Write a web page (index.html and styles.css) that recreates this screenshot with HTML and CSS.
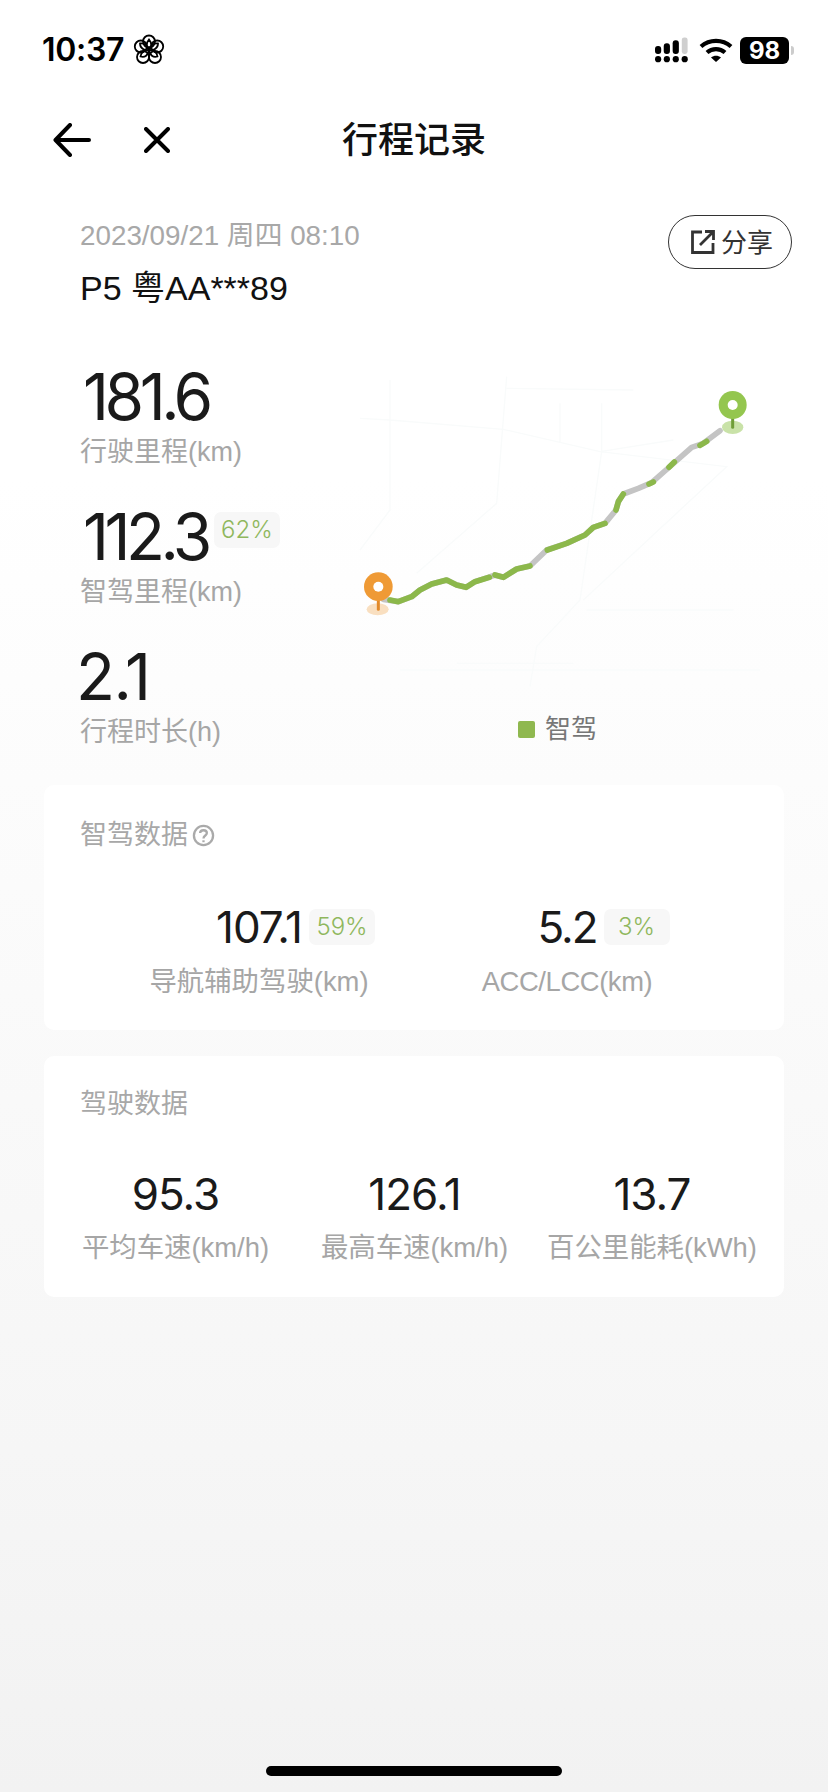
FILE: index.html
```html
<!DOCTYPE html>
<html lang="zh-CN">
<head>
<meta charset="utf-8">
<title>行程记录</title>
<link rel="stylesheet" href="styles.css">
</head>
<body>
<div class="page">
  <header class="status">
    <div class="status-left">
      <span class="clock">10:37</span>
      <svg class="flower" viewBox="0 0 32 32" fill="none" stroke="#000" stroke-width="1.8">
        <circle cx="16" cy="7.5" r="6"/><circle cx="24.2" cy="12.5" r="6"/><circle cx="22" cy="23" r="6"/><circle cx="10" cy="23" r="6"/><circle cx="7.8" cy="12.5" r="6"/>
        <path d="M16 16C13 13 13 9 16 5.5C19 9 19 13 16 16ZM16 16C17 12 20 9 25 9.5C25 14 21 17 16 16ZM16 16C20 15 24 18 24.5 22.5C20 24 17 21 16 16ZM16 16C15 21 12 24 7.500 22.500C8 18 12 15 16 16ZM16 16C11 17 7 14 7 9.500C12 9 15 12 16 16Z"/>
      </svg>
    </div>
    <div class="status-right">
      <svg class="signal" viewBox="0 0 34 26">
        <g fill="#000">
          <circle cx="3.200" cy="22.500" r="3.200"/><circle cx="12.200" cy="22.500" r="3.200"/><circle cx="21.400" cy="22.500" r="3.200"/><circle cx="30.600" cy="22.500" r="3.200"/>
          <rect x="0" y="9" width="6.400" height="8" rx="3"/><rect x="9" y="6" width="6.400" height="11" rx="3"/><rect x="18.200" y="3" width="6.400" height="14" rx="3"/>
        </g>
        <rect x="27.600" y="0" width="6" height="17" rx="2.500" fill="#cfcfcf"/>
      </svg>
      <svg class="wifi" viewBox="0 0 34 24" fill="none" stroke="#000" stroke-width="4.200">
        <path d="M2 8.500C10.500 1 23.500 1 32 8.500"/><path d="M8 14.500C13 10 21 10 26 14.500"/>
        <path d="M12 19.600 17 24 22 19.600C19 17 15 17 12 19.600Z" fill="#000" stroke="none"/>
      </svg>
      <div class="battery"><span class="battery-level">98</span><span class="battery-nub"></span></div>
    </div>
  </header>

  <nav class="navbar">
    <div class="nav-icons">
      <svg class="icon-back" viewBox="0 0 38 34" fill="none" stroke="#000" stroke-width="4" stroke-linecap="round" stroke-linejoin="round">
        <path d="M36 17H3M17 2 2.500 17 17 32"/>
      </svg>
      <svg class="icon-close" viewBox="0 0 26 26" fill="none" stroke="#000" stroke-width="4" stroke-linecap="round">
        <path d="M2 2 24 24M24 2 2 24"/>
      </svg>
    </div>
    <h1 class="title">行程记录</h1>
  </nav>

  <section class="trip">
    <svg class="map" viewBox="0 0 1260 1200" fill="none">
      <path class="map-roads" d="M60 145 150 150 490 178 780 245 1000 210M150 30V420L60 540M500 20 470 400 230 610M500 55 880 60M660 100V215M785 100V245L720 690 590 830 570 950M780 245 1160 290 730 690M740 720H1180M180 900H1260M350 880H700"/>
      <path class="route-base" d="M130 688 175 695 215 680 240 660 275 642 320 630 350 645 378 652 405 635 445 622 465 615 490 622 530 597 570 588 620 540 680 520 735 495 760 472 795 460 828 420 835 395 850 372 895 355 935 338 995 285 1055 232 1090 220 1140 182"/>
      <path class="route-smart" d="M150 690 175 695 215 680 240 660 275 642 320 630 350 645 378 652 405 635 448 622"/>
      <path class="route-smart" d="M465 615 490 622 530 597 570 588"/>
      <path class="route-smart" d="M622 540 680 520 735 495 760 472 795 460"/>
      <path class="route-smart" d="M828 420 835 395 850 372"/>
      <path class="route-smart" d="M927 342 940 336M987 292 1003 276M1080 226 1100 214"/>
      <ellipse cx="113" cy="718" rx="33" ry="18" fill="#f9dfc0"/>
      <path d="M115 680V718" stroke="#e28a2a" stroke-width="9" stroke-linecap="round"/>
      <circle cx="115" cy="650" r="43" fill="#ef9a35"/>
      <circle cx="115" cy="650" r="15" fill="#fff"/>
      <ellipse cx="1178" cy="172" rx="32" ry="20" fill="#c9e2a8"/>
      <path d="M1178 135V172" stroke="#6f9d37" stroke-width="9" stroke-linecap="round"/>
      <circle cx="1178" cy="105" r="42" fill="#94c64f"/>
      <circle cx="1178" cy="105" r="15" fill="#fff"/>
    </svg>

    <div class="trip-head">
      <div>
        <div class="date">2023/09/21 周四 08:10</div>
        <div class="plate">P5 粤AA***89</div>
      </div>
      <div class="share">
        <svg class="icon-share" viewBox="0 0 24 24" fill="none" stroke="#333" stroke-width="2.800">
          <path d="M11 2H1.500V22.500H22V13M9 15 21 3M14 1.500H22.500V10"/>
        </svg>
        <span class="share-text">分享</span>
      </div>
    </div>

    <div class="metrics">
      <div class="metric">
        <div class="metric-value first"><span class="big">181.6</span></div>
        <div class="metric-label">行驶里程(km)</div>
      </div>
      <div class="metric">
        <div class="metric-value first"><span class="big">112.3</span><span class="badge badge-top">62%</span></div>
        <div class="metric-label">智驾里程(km)</div>
      </div>
      <div class="metric">
        <div class="metric-value"><span class="big big-short">2.1</span></div>
        <div class="metric-label">行程时长(h)</div>
      </div>
    </div>

    <div class="legend"><span class="legend-swatch"></span>智驾</div>
  </section>

  <section class="card card-smart">
    <div class="card-title">智驾数据
      <svg class="icon-help" viewBox="0 0 24 24" fill="none" stroke="#aaa" stroke-width="2.400">
        <circle cx="12" cy="12" r="10"/><path d="M8.500 9.500C8.500 5.500 15.500 5.500 15.500 9.500C15.500 12 12 12 12 15"/><path d="M12 17V19"/>
      </svg>
    </div>
    <div class="stats-two">
      <div class="stat">
        <div class="stat-line"><span class="mid">107.1<span class="badge badge-float">59%</span></span></div>
        <div class="stat-label">导航辅助驾驶(km)</div>
      </div>
      <div class="stat">
        <div class="stat-line"><span class="mid mid-tight">5.2<span class="badge badge-float">3%</span></span></div>
        <div class="stat-label stat-label-latin">ACC/LCC(km)</div>
      </div>
    </div>
  </section>

  <section class="card card-drive">
    <div class="card-title">驾驶数据</div>
    <div class="stats-three">
      <div class="stat"><div class="mid">95.3</div><div class="stat-label">平均车速(km/h)</div></div>
      <div class="stat"><div class="mid">126.1</div><div class="stat-label">最高车速(km/h)</div></div>
      <div class="stat"><div class="mid">13.7</div><div class="stat-label">百公里能耗(kWh)</div></div>
    </div>
  </section>

  <div class="home-indicator"></div>
</div>
</body>
</html>
```
FILE: styles.css
```css
* { box-sizing: border-box; }
html, body { margin: 0; padding: 0; }
body {
  font-family: "Liberation Sans", "Noto Sans CJK SC", sans-serif;
  color: #111;
}
.page {
  position: relative;
  width: 828px;
  height: 1792px;
  overflow: hidden;
  background: linear-gradient(180deg, #fff 0, #fff 480px, #fcfcfc 780px, #f9f9f9 1100px, #f6f6f6 1450px, #f2f2f2 1792px);
}
.status {
  height: 98px;
  display: flex;
  justify-content: space-between;
  align-items: center;
  padding: 2px 34px 0 42px;
}
.status-left { display: flex; align-items: center; gap: 9px; }
.clock { font: 600 32px/1 Inter, sans-serif; letter-spacing: -0.3px; color: #000; }
.flower { width: 32px; height: 32px; }
.status-right { display: flex; align-items: center; }
.signal { width: 33px; height: 26px; margin-right: 11px; }
.wifi { width: 34px; height: 24px; margin-right: 7px; }
.battery { display: flex; align-items: center; }
.battery-level {
  width: 49px; height: 27px; border-radius: 6px; background: #000; color: #fff;
  font: 700 24px/27px Inter, sans-serif; text-align: center;
}
.battery-nub { width: 3px; height: 9px; margin-left: 2px; background: #ccc; border-radius: 0 3px 3px 0; }

.navbar {
  height: 84px;
  padding-top: 2px;
  position: relative;
  display: flex;
  align-items: center;
  justify-content: center;
}
.nav-icons {
  position: absolute; left: 53px; top: 0; bottom: 0;
  display: flex; align-items: center; gap: 53px;
}
.icon-back { width: 38px; height: 34px; }
.icon-close { width: 26px; height: 26px; }
.title { margin: 0; font-size: 36px; font-weight: 500; line-height: 1; color: #111; }

.trip { position: relative; height: 603px; padding: 0 36px 0 80px; }
.map { position: absolute; left: 340px; top: 188px; width: 420px; height: 400px; }
.map-roads { stroke: #f9fbfb; stroke-width: 4; }
.route-base, .route-smart { stroke-width: 17; stroke-linecap: round; stroke-linejoin: round; }
.route-base { stroke: #c4c4c4; }
.route-smart { stroke: #8cb84b; }
.trip-head { position: relative; display: flex; justify-content: space-between; align-items: flex-start; padding-top: 36px; }
.date { font-size: 27.8px; line-height: 36px; color: #a8a8a8; }
.plate { font-size: 34px; line-height: 40px; margin-top: 14px; color: #111; }
.share {
  display: flex; align-items: center; gap: 6px;
  width: 124px; height: 54px; margin-top: -3px; padding-left: 22px;
  border: 1px solid #333; border-radius: 27px;
  font-size: 26px; color: #333;
}
.share-text { margin-bottom: 4px; }
.icon-share { width: 24px; height: 24px; }

.metrics { position: relative; margin-top: 50px; display: flex; flex-direction: column; gap: 30px; }
.metric-value { display: flex; align-items: center; height: 78px; }
.metric-value.first { padding-left: 3px; }
.big { font: 400 64px/66px Inter, sans-serif; letter-spacing: -4.500px; color: #1a1a1a; }
.big-short { letter-spacing: -1.500px; margin-left: -4px; }
.badge {
  display: inline-block; height: 36px; min-width: 66px; border-radius: 7px;
  background: #f7f7f7; color: #8fb75d; text-align: center; letter-spacing: 0;
  font: 300 24px/36px Inter, sans-serif;
}
.badge-top { margin-left: 6px; margin-bottom: 14px; }
.badge-float { position: absolute; left: 100%; top: 4px; margin-left: 7px; }
.metric-label { font-size: 27px; line-height: 32px; color: #a6a6a6; font-weight: 400; }

.legend {
  position: absolute; left: 518px; top: 530px;
  display: flex; align-items: center; gap: 10px;
  font-size: 26px; line-height: 34px; color: #777;
}
.legend-swatch { width: 17px; height: 17px; background: #8fb84f; border-radius: 2px; }

.card {
  margin: 0 44px 0 44px;
  background: #fff;
  border-radius: 10px;
  padding: 32px 36px 0;
}
.card-smart { height: 245px; }
.card-drive { height: 241px; margin-top: 26px; padding-top: 30px; }
.card-title {
  display: flex; align-items: center; gap: 4px;
  font-size: 27px; line-height: 36px; color: #a8a8a8;
}
.icon-help { width: 23px; height: 23px; }
.stats-two { display: grid; grid-template-columns: 358px 258px; margin-top: 52px; }
.stat { display: flex; flex-direction: column; align-items: center; }
.stat-line { display: flex; align-items: center; height: 44px; }
.mid { position: relative; font: 400 44px/44px Inter, sans-serif; letter-spacing: -1px; color: #1a1a1a; }
.mid-tight { letter-spacing: -2px; }
.stat-label { font-size: 27.400px; line-height: 34px; color: #a6a6a6; margin-top: 16px; white-space: nowrap; }
.stat-label-latin { letter-spacing: -0.400px; }
.stats-three { display: grid; grid-template-columns: 239px 239px 236px; margin: 50px -30px 0 -24px; }
.stats-three .stat-label { margin-top: 15px; }

.home-indicator {
  position: absolute; left: 266px; bottom: 16px; width: 296px; height: 10px;
  background: #000; border-radius: 5px;
}
```
